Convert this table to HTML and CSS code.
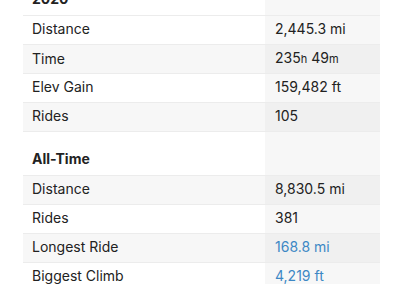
FILE: index.html
```html
<!DOCTYPE html>
<html>
<head>
<meta charset="utf-8">
<link rel="stylesheet" href="styles.css">
</head>
<body>
<div class="stats">
  <div class="row head"><div class="label">2020</div><div class="value"></div></div>
  <div class="row"><div class="label">Distance</div><div class="value"><span>2,445.3 mi</span></div></div>
  <div class="row alt"><div class="label">Time</div><div class="value"><span>235<span class="unit">h</span> 49<span class="unit">m</span></span></div></div>
  <div class="row"><div class="label">Elev Gain</div><div class="value"><span>159,482 ft</span></div></div>
  <div class="row alt"><div class="label">Rides</div><div class="value"><span>105</span></div></div>
  <div class="row head"><div class="label">All-Time</div><div class="value"></div></div>
  <div class="row alt"><div class="label">Distance</div><div class="value"><span>8,830.5 mi</span></div></div>
  <div class="row"><div class="label">Rides</div><div class="value"><span>381</span></div></div>
  <div class="row alt"><div class="label">Longest Ride</div><div class="value link"><span>168.8 mi</span></div></div>
  <div class="row"><div class="label">Biggest Climb</div><div class="value link"><span>4,219 ft</span></div></div>
</div>
</body>
</html>
```
FILE: styles.css
```css
html, body {
  margin: 0;
  padding: 0;
  background: #fff;
}
body {
  font-family: Inter, "Noto Sans", sans-serif;
  font-size: 14px;
  color: #222;
  overflow: hidden;
}
.stats {
  display: flex;
  flex-direction: column;
  width: 357px;
  margin: -29px 0 0 23px;
}
.row {
  display: grid;
  grid-template-columns: 242px 115px;
  border-top: 1px solid #ececec;
  height: 28px;
  line-height: 20px;
}
.row .label {
  padding: 3px 9px 5px;
  display: flex;
  align-items: center;
}
.row .value {
  padding: 3px 10px 5px;
  display: flex;
  align-items: center;
  background: #f7f7f7;
}
.row.alt .label {
  background: #f7f7f7;
}
.row.alt .value {
  background: #f0f0f0;
}
.row.head {
  height: 43px;
}
.row.head .label {
  font-weight: 700;
  align-items: flex-end;
  padding-bottom: 6px;
}
.unit {
  font-size: 11px;
}
.link {
  color: #3d88c5;
}
```
